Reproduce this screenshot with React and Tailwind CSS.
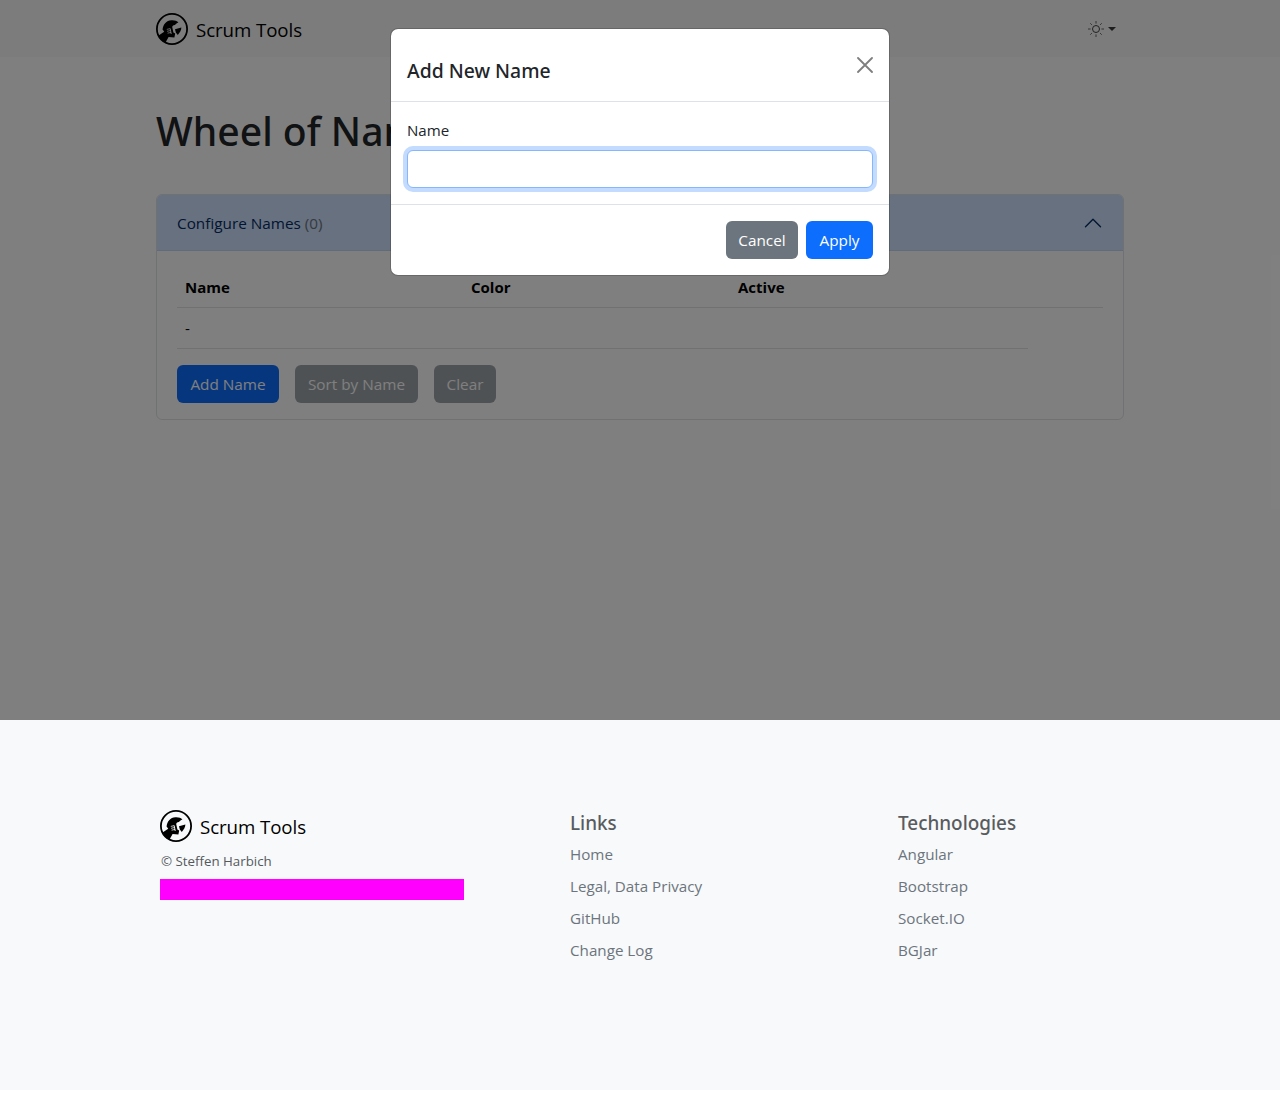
import React from "react";

const linkGroups = [
  { title: "Links", items: ["Home", "Legal, Data Privacy", "GitHub", "Change Log"], width: "w-[328px]" },
  { title: "Technologies", items: ["Angular", "Bootstrap", "Socket.IO", "BGJar"], width: "w-[220px]" },
];

function Logo() {
  return (
    <svg viewBox="0 0 32 32" className="size-8 shrink-0">
      <circle cx="16" cy="16" r="15.1" fill="none" stroke="#000" strokeWidth="1.8" />
      <path d="M2.6 22.6 L8.2 18.8 C7.6 17.8 7.2 17.2 6.6 16.8 C6.8 11.6 10.4 7.4 15.4 7.2 C18.4 7 21 7.7 22.4 9.4 C20.6 10.2 19.6 11 18.8 12 C17.4 12.2 16.4 12.8 16.2 14 L17.4 19.4 L19.2 20.4 L18.4 24.4 L12.6 24 L9.4 29.8 C6 28.6 3.6 25.8 2.6 22.6 Z" fill="#000" />
      <path d="M19 16.2 L25.4 14.4 C25.2 17 24 19.2 21.8 22 L19.8 19.4 Z" fill="#000" />
      <g stroke="#fff" strokeWidth="0.9" fill="none">
        <path d="M10.8 16.4 L14.2 15.6 M11.1 18.3 L14.5 17.5 M11.6 20.2 L15 19.4" strokeOpacity="0.85" />
        <path d="M14.2 15.6 L15.2 21" />
      </g>
    </svg>
  );
}

function Brand({ className = "" }) {
  return (
    <div className={"flex items-center gap-2 " + className}>
      <Logo />
      <span className="pt-[2px] text-[18.7px] leading-[30px] tracking-[-0.08px] text-black">Scrum Tools</span>
    </div>
  );
}

function Button({ className, children }) {
  return (
    <button className={"flex h-[38px] items-center justify-center rounded-md pt-px text-[15.3px] whitespace-nowrap text-white " + className}>
      {children}
    </button>
  );
}

function Navbar() {
  return (
    <nav className="flex h-[57px] justify-center bg-[#f8f9fa]">
      <div className="flex w-[968px] items-center justify-between">
        <Brand className="pt-px" />
        <div className="mr-2 flex items-center gap-1">
          <svg viewBox="0 0 16 16" className="size-4" fill="none" stroke="#666" strokeWidth="1">
            <circle cx="8" cy="8" r="3.5" stroke="#444" />
            <path d="M8 0v2.6M8 13.4V16M0 8h2.6M13.4 8H16M2.3 2.3l1.6 1.6M12.1 12.1l1.6 1.6M13.7 2.3l-1.6 1.6M3.9 12.1l-1.6 1.6" />
          </svg>
          <span className="border-x-4 border-t-4 border-x-transparent border-t-[#3b3b3b]" />
        </div>
      </div>
    </nav>
  );
}

function NamesCard() {
  return (
    <section className="mt-[39px] rounded-md border border-[#dee2e6]">
      <header className="flex h-[56px] items-center justify-between rounded-t-[5px] border-b border-[#c5d7f2] bg-[#cfe2ff] px-5 text-[15.3px] text-[#052c65]">
        <span className="pt-[2px]">
          Configure Names <span className="text-[#6c757d]">(0)</span>
        </span>
        <svg viewBox="0 0 16 16" className="size-5" fill="none" stroke="#052c65" strokeWidth="1.1" strokeLinecap="round" strokeLinejoin="round">
          <path d="M2 11 8 5l6 6" />
        </svg>
      </header>
      <div className="px-5 pt-4 pb-4">
        <div className="grid h-[41px] grid-cols-[286px_267px_1fr] items-center border-b border-[#dee2e6] text-[15px] font-bold text-black">
          <span className="pl-2">Name</span>
          <span className="pl-2">Color</span>
          <span className="pl-2">Active</span>
        </div>
        <div className="flex h-[41px] w-[851px] items-center border-b border-[#dee2e6] pl-2 text-[15.3px] text-black">-</div>
        <div className="mt-4 flex gap-4">
          <Button className="w-[102px] bg-[#0d6efd]">Add Name</Button>
          <Button className="w-[123px] bg-[#6c757d] opacity-65">Sort by Name</Button>
          <Button className="w-[62px] bg-[#6c757d] opacity-65">Clear</Button>
        </div>
      </div>
    </section>
  );
}

function AddNameDialog() {
  return (
    <div role="dialog" className="w-[500px] rounded-lg border border-black/[0.175] bg-white bg-clip-padding">
      <div className="flex h-[73px] justify-between border-b border-[#dee2e6] px-4">
        <h4 className="pt-[30px] font-['Noto_Sans'] text-[19.35px] leading-6 font-medium">Add New Name</h4>
        <button aria-label="Close" className="mt-7 size-4 opacity-50">
          <svg viewBox="0 0 16 16" className="size-4" stroke="#000" strokeWidth="1.8" strokeLinecap="round">
            <path d="M1 1l14 14M15 1L1 15" />
          </svg>
        </button>
      </div>
      <div className="p-4">
        <label className="mb-2 block text-[15.1px] leading-6">Name</label>
        <input className="block h-[38px] w-full rounded-md border border-[#86b7fe] bg-white px-3 ring-4 ring-[#c2dbfe] outline-none" />
      </div>
      <div className="flex justify-end gap-2 border-t border-[#dee2e6] p-4">
        <Button className="w-[72px] bg-[#6c757d]">Cancel</Button>
        <Button className="w-[67px] bg-[#0d6efd]">Apply</Button>
      </div>
    </div>
  );
}

function Footer() {
  return (
    <footer className="flex h-[370px] justify-center bg-[#f8f9fa] pt-[90px]">
      <div className="flex w-[960px]">
        <div className="w-[410px]">
          <Brand />
          <p className="mt-[9px] pl-px text-[13.3px] leading-[21px] text-[#54595e]">© Steffen Harbich</p>
          <div className="mt-[7px] h-[21px] w-[304px] bg-[#ff00ff]" />
        </div>
        {linkGroups.map((group) => (
          <div key={group.title} className={group.width}>
            <h5 className="mb-[7px] pt-px font-['Noto_Sans'] text-[18.9px] leading-6 font-medium text-[#595c5f]">{group.title}</h5>
            <ul className="flex flex-col gap-2 text-[15.2px] leading-6 text-[#6c757d]">
              {group.items.map((item) => (
                <li key={item}>{item}</li>
              ))}
            </ul>
          </div>
        ))}
      </div>
    </footer>
  );
}

export default function App() {
  return (
    <div className="h-[1106px] overflow-hidden bg-white font-['Open_Sans',sans-serif] text-[#212529]">
      <div className="relative h-[720px]">
        <Navbar />
        <main className="mx-auto w-[968px] pt-[50px]">
          <h1 className="font-['Noto_Sans'] text-[39.1px] leading-[48px] font-medium whitespace-nowrap">Wheel of Names</h1>
          <NamesCard />
        </main>
        <div className="absolute inset-0 flex items-start justify-center bg-black/50 pt-7">
          <AddNameDialog />
        </div>
      </div>
      <Footer />
    </div>
  );
}
